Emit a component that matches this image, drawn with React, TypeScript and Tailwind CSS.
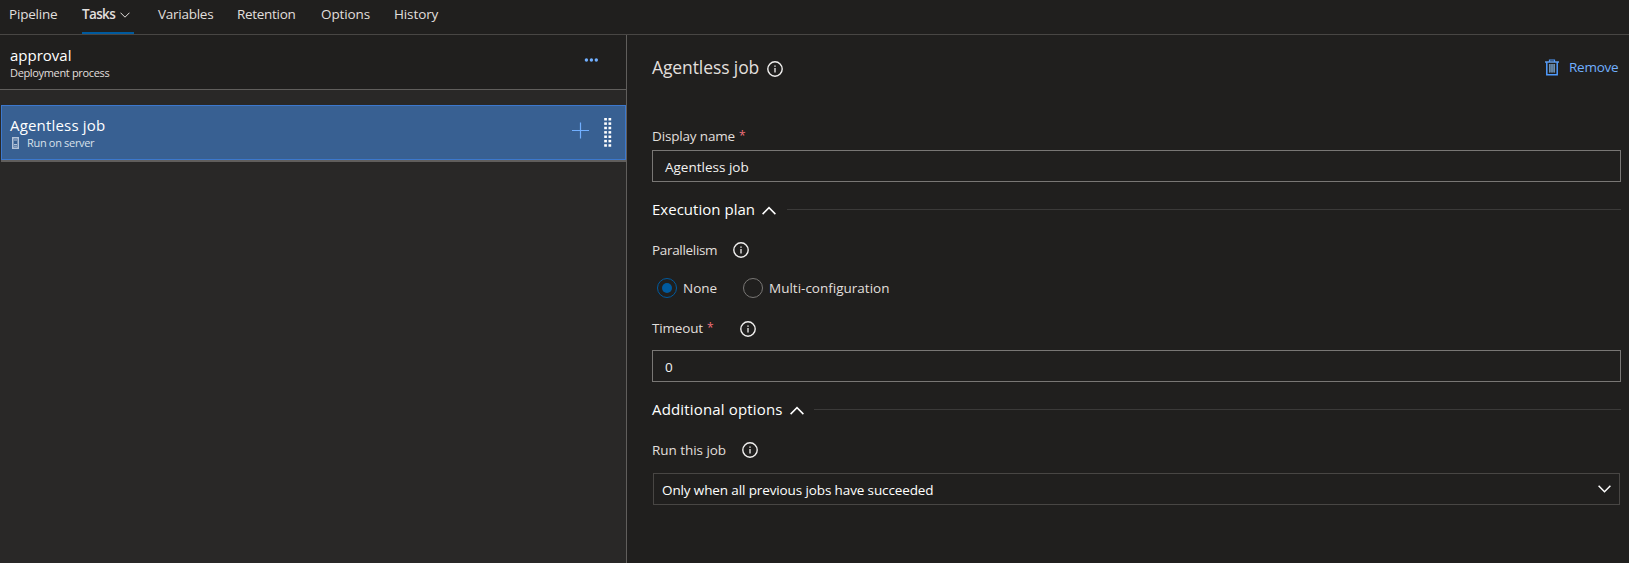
import type { ReactNode } from "react";

function InfoIcon({ className }: { className: string }) {
  return (
    <svg viewBox="0 0 16 16" className={`size-4 shrink-0 ${className}`} fill="none">
      <circle cx="8" cy="8" r="7.2" stroke="#f0efee" strokeWidth="1.4" />
      <path d="M8 7v4.6" stroke="#f0efee" strokeWidth="1.3" />
      <path d="M8 4.4v1.4" stroke="#f0efee" strokeWidth="1.4" />
    </svg>
  );
}

function Section({ title, className }: { title: string; className: string }) {
  return (
    <div className={`flex h-5 items-center ${className}`}>
      <h2 className="shrink-0 whitespace-nowrap text-[15px] leading-5 text-white">{title}</h2>
      <svg viewBox="0 0 14 9" className="ml-[7px] mt-[2px] h-[9px] w-3.5 shrink-0" fill="none">
        <path d="M0.6 8.1 7 1.6l6.4 6.5" stroke="#fff" strokeWidth="1.5" />
      </svg>
    </div>
  );
}

function SectionRow({ children }: { children: ReactNode }) {
  return (
    <div className="mt-[17px] flex h-5 items-center">
      {children}
      <div className="ml-[11px] h-px grow bg-[#3b3a39]" />
    </div>
  );
}

function Tab({ label, className }: { label: string; className: string }) {
  return <a className={`shrink-0 whitespace-nowrap ${className}`}>{label}</a>;
}

function TrashIcon() {
  return (
    <svg viewBox="0 0 14 17" className="h-[17px] w-3.5 shrink-0" fill="none" stroke="#4f9bff">
      <path d="M0 3h14" strokeWidth="1.3" stroke="#71afff" />
      <path d="M4.5 3V1h5v2" strokeWidth="1.2" />
      <path d="M1.8 3v12.7h10.4V3" strokeWidth="1.5" />
      <rect x="4" y="5" width="6" height="8.5" fill="#55708c" stroke="none" />
      <path d="M4.6 5v8.5M7 5v8.5M9.4 5v8.5" strokeWidth="0.9" stroke="#7396b8" />
    </svg>
  );
}

const gripRows = [0, 1, 2, 3, 4, 5, 6];

export default function App() {
  return (
    <div className="flex h-[563px] w-full flex-col overflow-hidden bg-[#201f1e] font-['Open_Sans','Noto_Sans',sans-serif] text-[13.5px] leading-5 text-[#e1dfdd]">
      <nav className="flex h-[35px] shrink-0 border-b border-[#484644] pl-[9px] pt-1">
        <Tab label="Pipeline" className="w-[73px] tracking-[-0.2px]" />
        <div className="mr-6 flex w-[52px] shrink-0 border-b-2 border-[#005a9e]">
          <span className="w-[38px] text-[13.5px] font-semibold tracking-[-0.65px]">Tasks</span>
          <svg viewBox="0 0 10 6" className="mt-2 h-1.5 w-2.5" fill="none">
            <path d="M0.5 0.7 5 5.2 9.5 0.7" stroke="#e1dfdd" strokeWidth="1" />
          </svg>
        </div>
        <Tab label="Variables" className="w-[79px] tracking-[-0.26px]" />
        <Tab label="Retention" className="w-[84px] tracking-[-0.3px]" />
        <Tab label="Options" className="w-[73px] tracking-[-0.12px]" />
        <Tab label="History" className="tracking-[-0.12px]" />
      </nav>

      <div className="flex min-h-0 grow">
        <aside className="w-[627px] shrink-0 border-r border-[#605e5c] bg-[#292827]">
          <header className="flex h-[55px] justify-between border-b border-[#605e5c] bg-[#201f1e] pl-2.5 pr-7 pt-2.5">
            <div>
              <h1 className="text-[15px] leading-5 text-white">approval</h1>
              <p className="text-[11px] leading-4 tracking-[-0.34px]">Deployment process</p>
            </div>
            <svg viewBox="0 0 14 4" className="mt-[13px] h-1 w-3.5" fill="#71afff">
              <circle cx="2.4" cy="2" r="1.7" />
              <circle cx="7.4" cy="2" r="1.7" />
              <circle cx="12.3" cy="2" r="1.7" />
            </svg>
          </header>

          <div className="ml-px mt-[15px] flex h-[57px] border-b-2 border-[#605e5c]">
            <div className="flex h-[55px] w-full border border-[#3c78cd] bg-[#386092] pl-2 pt-[9px]">
              <div className="grow">
                <h2 className="text-[15px] leading-5 tracking-[0.18px] text-white">Agentless job</h2>
                <div className="flex h-4 items-center">
                  <svg viewBox="0 0 7 12" className="ml-0.5 h-3 w-[7px]" fill="none">
                    <rect x="0.75" y="0.75" width="5.5" height="10.5" stroke="#b3c3d8" strokeWidth="1.5" />
                    <path d="M2 3h3M2 7.5h3M2 9.2h3" stroke="#b3c3d8" strokeWidth="1" />
                  </svg>
                  <span className="ml-2 text-[11px] leading-4 tracking-[-0.32px] text-[#d9e1eb]">Run on server</span>
                </div>
              </div>
              <svg viewBox="0 0 17 17" className="mr-[15px] mt-[7px] size-[17px]" stroke="#71afff" strokeWidth="1.2">
                <path d="M0 8.5h17M8.5 0.5v16" />
              </svg>
              <svg viewBox="0 0 8 30" className="mr-[13px] mt-[3px] h-[30px] w-2" fill="#fff">
                {gripRows.map((row) => (
                  <g key={row}>
                    <rect x="0.2" y={row * 4.37} width="2.7" height="2.5" />
                    <rect x="4.5" y={row * 4.37} width="2.7" height="2.5" />
                  </g>
                ))}
              </svg>
            </div>
          </div>
        </aside>

        <main className="min-w-0 grow pl-[25px] pr-2 pt-5">
          <div className="flex h-6 items-center">
            <h1 className="w-[107px] whitespace-nowrap text-[17.5px] leading-6 tracking-[-0.1px]">Agentless job</h1>
            <InfoIcon className="ml-2 mt-1" />
            <button className="ml-auto mr-0.5 flex items-center text-[#71afff]">
              <TrashIcon />
              <span className="ml-2.5 h-5 w-[50px] text-left tracking-[-0.26px]">Remove</span>
            </button>
          </div>

          <label className="mt-[47px] flex h-5">
            <span className="tracking-[-0.16px]">Display name</span>
            <span className="ml-1 text-[12px] text-[#f1707b]">*</span>
          </label>
          <div className="mt-1 flex h-8 items-center border border-[#797775] pl-3 pt-0.5 text-[#f3f2f1]">Agentless job</div>

          <SectionRow>
            <Section title="Execution plan" className="w-[124px] tracking-[0.02px] [&>h2]:w-[103px]" />
          </SectionRow>
          <div className="mt-[21px] flex h-5 items-center">
            <span className="w-[65px] whitespace-nowrap tracking-[-0.32px]">Parallelism</span>
            <InfoIcon className="ml-4" />
          </div>
          <div className="mt-[18px] flex h-5 items-center pl-[5px]">
            <span className="flex size-5 items-center justify-center rounded-full border border-[#005a9e]">
              <span className="size-2.5 rounded-full bg-[#005a9e]" />
            </span>
            <span className="ml-1.5 w-[60px]">None</span>
            <span className="size-5 rounded-full border border-[#797775]" />
            <span className="ml-1.5">Multi-configuration</span>
          </div>
          <div className="mt-5 flex h-5 items-center">
            <span className="w-[51px] tracking-[-0.16px]">Timeout</span>
            <span className="ml-1 w-[33px] text-[12px] text-[#f1707b]">*</span>
            <InfoIcon className="mt-px" />
          </div>
          <div className="mt-3 flex h-8 items-center border border-[#797775] pl-3 pt-0.5 text-[#f3f2f1]">0</div>

          <SectionRow>
            <Section title="Additional options" className="w-[151px] tracking-[0.16px] [&>h2]:w-[130.5px]" />
          </SectionRow>
          <div className="mt-[21px] flex h-5 items-center">
            <span className="w-[74px] whitespace-nowrap tracking-[-0.05px]">Run this job</span>
            <InfoIcon className="ml-[15.5px]" />
          </div>
          <div className="ml-px mr-px mt-[13px] flex h-8 items-center justify-between border border-[#484644] pl-2 pr-2 pt-0.5 text-white">
            <span className="tracking-[-0.12px]">Only when all previous jobs have succeeded</span>
            <svg viewBox="0 0 13 8" className="-mt-0.5 h-2 w-[13px]" fill="none">
              <path d="M0.6 0.8 6.5 6.7l5.9-5.9" stroke="#fff" strokeWidth="1.5" />
            </svg>
          </div>
        </main>
      </div>
    </div>
  );
}
